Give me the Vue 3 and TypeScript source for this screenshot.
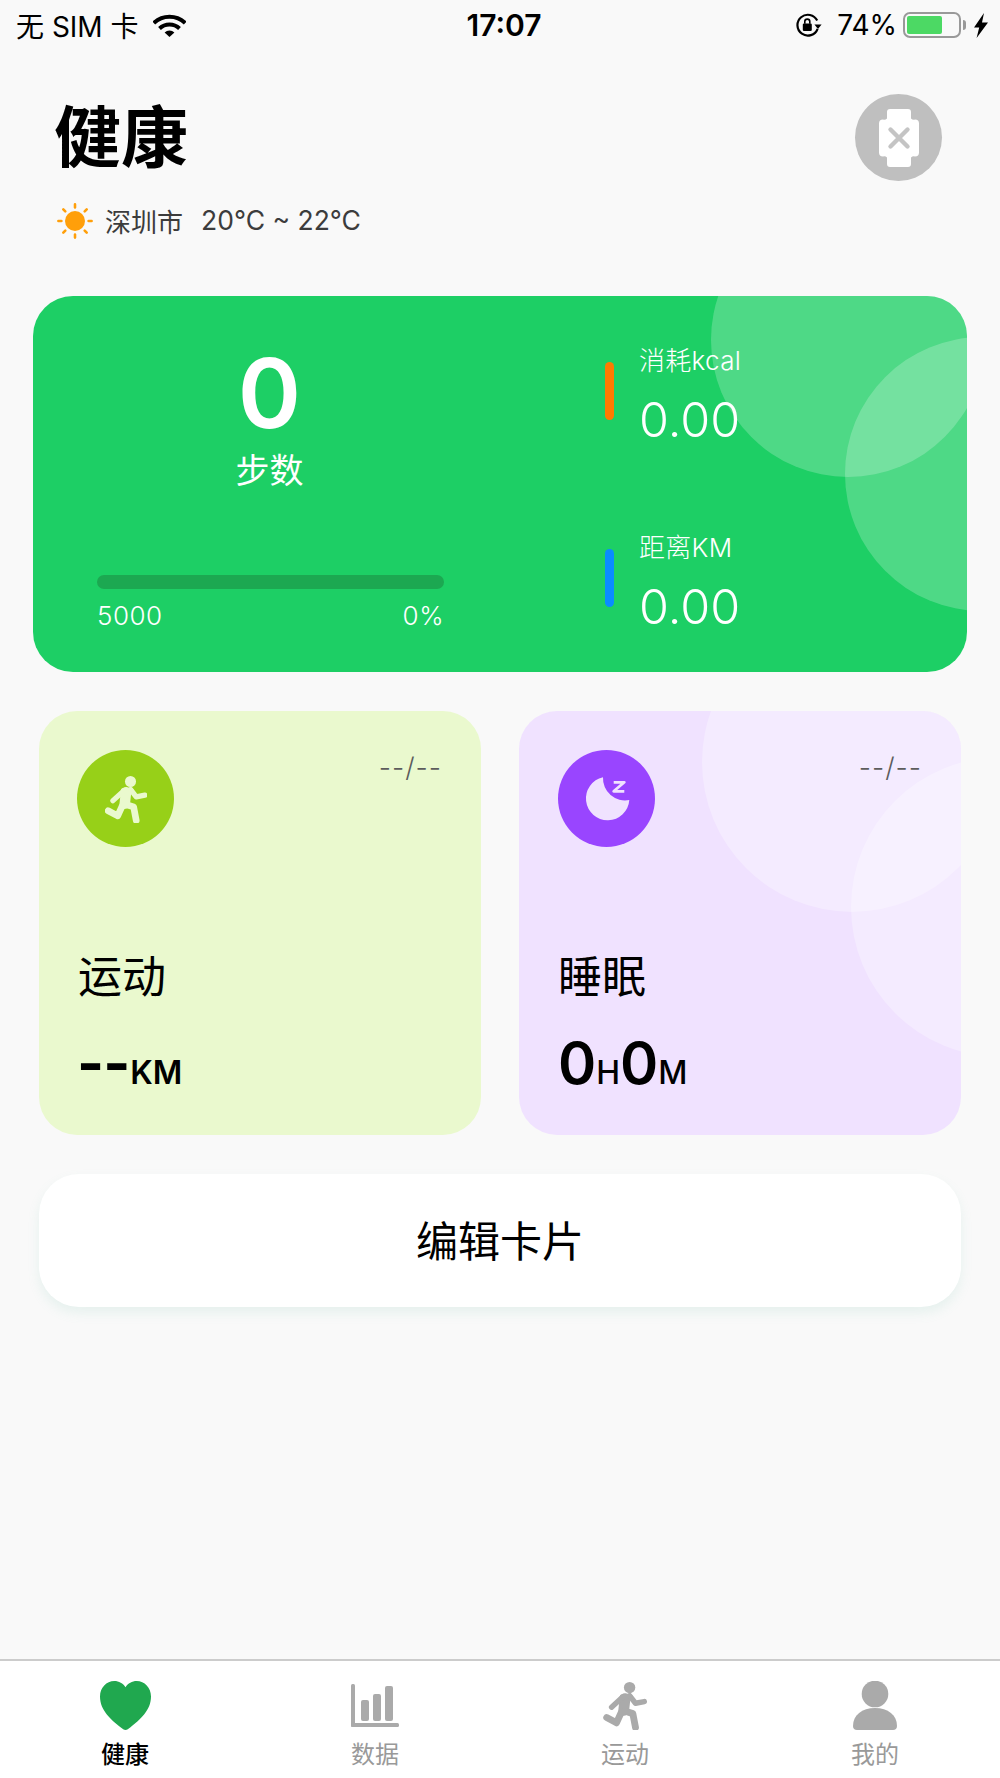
<template>
  <div class="page">
    <div class="status-bar">
      <div class="status-left">
        <span>无 SIM 卡</span>
        <svg class="wifi" viewBox="0 0 33 23" width="33" height="23">
          <path d="M0.800 9A23 23 0 0 1 32.200 9" fill="none" stroke="#000" stroke-width="4" />
          <path d="M6.500 14.500A14.500 14.500 0 0 1 26.500 14.500" fill="none" stroke="#000" stroke-width="4" />
          <path d="M11.600 18.400A7 7 0 0 1 21.400 18.400L16.500 23Z" fill="#000" />
        </svg>
      </div>
      <div class="status-time">17:07</div>
      <div class="status-right">
        <svg class="rotate-lock" viewBox="0 0 27 24" width="27" height="24">
          <path d="M22.600 15.800A10.400 10.400 0 1 1 22.200 7.600" fill="none" stroke="#000" stroke-width="2.200" />
          <path d="M19.400 11.400h7.200l-3.600 4.600Z" fill="#000" />
          <rect x="7.800" y="10.600" width="9" height="7.400" rx="1.200" fill="#000" />
          <path d="M9.800 10.800V8.600a2.500 2.500 0 0 1 5 0v2.200" fill="none" stroke="#000" stroke-width="1.600" />
        </svg>
        <span class="battery-text">74%</span>
        <div class="battery">
          <div class="battery-level"></div>
        </div>
        <div class="battery-nub"></div>
        <svg class="bolt" viewBox="0 0 14 25" width="14" height="25">
          <path d="M10 0L0 14.400h5.200L2.600 25 14 9.600H8Z" fill="#000" />
        </svg>
      </div>
    </div>

    <header class="header">
      <div>
        <h1 class="title">健康</h1>
        <div class="weather">
          <svg class="sun" viewBox="0 0 36 36" width="36" height="36">
            <circle cx="18" cy="18" r="10" fill="#ff9f0a" />
            <g stroke="#ff9f0a" stroke-width="2.600" stroke-linecap="round">
              <path d="M18 1.400V4.400M18 31.600V34.600M1.400 18H4.400M31.600 18H34.600" />
              <path d="M6.300 6.300L8.300 8.300M27.700 27.700L29.700 29.700M6.300 29.700L8.300 27.700M27.700 8.300L29.700 6.300" />
            </g>
          </svg>
          <span class="city">深圳市</span>
          <span class="temp">20°C ~ 22°C</span>
        </div>
      </div>
      <div class="watch">
        <svg viewBox="0 0 40 58" width="40" height="58">
          <path d="M8 3a3 3 0 0 1 3-3h18a3 3 0 0 1 3 3v6.500a4 4 0 0 0 4 1h0a4 4 0 0 1 4 4v29a4 4 0 0 1-4 4h0a4 4 0 0 0-4 1V55a3 3 0 0 1-3 3H11a3 3 0 0 1-3-3v-6.500a4 4 0 0 0-4-1h0a4 4 0 0 1-4-4v-29a4 4 0 0 1 4-4h0a4 4 0 0 0 4-1Z" fill="#fff" />
          <path d="M11.500 20.500L28.500 37.500M28.500 20.500L11.500 37.500" stroke="#c4c4c4" stroke-width="4.400" stroke-linecap="round" />
        </svg>
      </div>
    </header>

    <section class="steps-card">
      <div class="circle steps-circle-a"></div>
      <div class="circle steps-circle-b"></div>
      <div class="steps-left">
        <div class="steps-num">0</div>
        <div class="steps-label">步数</div>
        <div class="progress"></div>
        <div class="progress-meta">
          <span>5000</span>
          <span>0%</span>
        </div>
      </div>
      <div class="steps-right">
        <div class="stat">
          <div class="stat-bar orange"></div>
          <div>
            <div class="stat-label">消耗kcal</div>
            <div class="stat-value">0.00</div>
          </div>
        </div>
        <div class="stat">
          <div class="stat-bar blue"></div>
          <div>
            <div class="stat-label">距离KM</div>
            <div class="stat-value">0.00</div>
          </div>
        </div>
      </div>
    </section>

    <section class="cards">
      <div class="card sport">
        <div class="card-top">
          <div class="card-icon sport-icon">
            <svg viewBox="0 0 44 50" width="42" height="48" fill="none" stroke="#eaf9ce" stroke-linecap="round" stroke-linejoin="round">
              <circle cx="26.700" cy="6.700" r="5.800" fill="#eaf9ce" stroke="none" />
              <path d="M19.500 16.500H27" stroke-width="6" />
              <path d="M22 18L20.700 30" stroke-width="11" />
              <path d="M18.300 31.700L13.300 42.700L3.300 37.300M21.700 30.700L30 33.300L32.700 47.300" stroke-width="7" />
              <path d="M19.300 16.700L8.300 26.700M26.700 15L32.700 22.700L41.700 21" stroke-width="5.500" />
            </svg>
          </div>
          <span class="card-date">--/--</span>
        </div>
        <div class="card-title">运动</div>
        <div class="card-value"><b class="dash">--</b><span class="unit-km">KM</span></div>
      </div>
      <div class="card sleep">
        <div class="circle sleep-circle-a"></div>
        <div class="circle sleep-circle-b"></div>
        <div class="card-top">
          <div class="card-icon sleep-icon">
            <svg viewBox="0 0 50 50" width="50" height="50" fill="none">
              <path d="M21 3.300A21.700 21.700 0 1 0 47.300 26A22 22 0 0 1 21 3.300Z" fill="#f0e2ff" />
              <path d="M31.700 8.300H42.300L31.700 17.300H42.300" stroke="#f0e2ff" stroke-width="2.800" stroke-linejoin="round" />
            </svg>
          </div>
          <span class="card-date">--/--</span>
        </div>
        <div class="card-title">睡眠</div>
        <div class="card-value"><b>0</b><span class="unit">H</span><b>0</b><span class="unit">M</span></div>
      </div>
    </section>

    <button class="edit-btn">编辑卡片</button>

    <nav class="tabbar">
      <div class="tab active">
        <svg viewBox="0 0 51 49" width="51" height="49">
          <path d="M25.500 49C24 49 22.500 47.800 20.500 46.200C11 38.600 0 29.500 0 15.500C0 6.500 6.500 0 14.300 0C19 0 23 2.300 25.500 6.200C28 2.300 32 0 36.700 0C44.500 0 51 6.500 51 15.500C51 29.500 40 38.600 30.500 46.200C28.500 47.800 27 49 25.500 49Z" fill="#20a84f" />
        </svg>
        <span>健康</span>
      </div>
      <div class="tab">
        <svg viewBox="0 0 48 49" width="48" height="49" fill="#aaa">
          <rect x="0" y="3" width="4" height="43" rx="1.500" />
          <rect x="0" y="42" width="48" height="4" rx="1.500" />
          <rect x="10" y="19" width="8" height="21" rx="2" />
          <rect x="22" y="13" width="8" height="27" rx="2" />
          <rect x="34" y="5" width="8" height="35" rx="2" />
        </svg>
        <span>数据</span>
      </div>
      <div class="tab">
        <svg viewBox="0 0 44 50" width="44" height="49" fill="none" stroke="#aaa" stroke-linecap="round" stroke-linejoin="round">
          <circle cx="26.700" cy="6.700" r="5.800" fill="#aaa" stroke="none" />
          <path d="M19.500 16.500H27" stroke-width="6" />
          <path d="M22 18L20.700 30" stroke-width="11" />
          <path d="M18.300 31.700L13.300 42.700L3.300 37.300M21.700 30.700L30 33.300L32.700 47.300" stroke-width="7" />
          <path d="M19.300 16.700L8.300 26.700M26.700 15L32.700 22.700L41.700 21" stroke-width="5.500" />
        </svg>
        <span>运动</span>
      </div>
      <div class="tab">
        <svg viewBox="0 0 44 49" width="44" height="49" fill="#aaa">
          <circle cx="22" cy="13" r="13.300" />
          <path d="M0 45C0 34 9 27 22 27S44 34 44 45C44 47.500 42.500 49 40 49H4C1.500 49 0 47.500 0 45Z" />
        </svg>
        <span>我的</span>
      </div>
    </nav>
  </div>
</template>

<script setup lang="ts">
</script>

<style>
html,
body {
  margin: 0;
  background: #f9f9f9;
}
</style>

<style scoped>
.page {
  width: 1000px;
  height: 1778px;
  display: flex;
  flex-direction: column;
  overflow: hidden;
  background: #f9f9f9;
  font-family: Inter, "Noto Sans CJK SC", sans-serif;
  color: #000;
}

.status-bar {
  height: 50px;
  flex-shrink: 0;
  padding: 0 12px 0 16px;
  box-sizing: border-box;
  display: grid;
  grid-template-columns: 1fr auto 1fr;
  align-items: center;
  font-size: 28px;
}

.status-left {
  display: flex;
  align-items: center;
  gap: 14px;
}

.status-time {
  position: relative;
  left: 2px;
  font-size: 30px;
  font-weight: 600;
}

.status-right {
  display: flex;
  align-items: center;
  justify-content: flex-end;
}

.battery-text {
  margin-left: 15px;
  font-size: 28px;
}

.battery {
  width: 58px;
  height: 26px;
  margin-left: 6px;
  box-sizing: border-box;
  border: 2px solid #999;
  border-radius: 7px;
  padding: 2px;
}

.battery-level {
  width: 35px;
  height: 18px;
  background: #4cd964;
  border-radius: 2px;
}

.battery-nub {
  width: 3px;
  height: 10px;
  margin-left: 2px;
  background: #999;
  border-radius: 0 3px 3px 0;
}

.bolt {
  margin-left: 8px;
}

.header {
  padding: 44px 58px 0 55px;
  display: flex;
  justify-content: space-between;
  align-items: flex-start;
}

.title {
  margin: 10px 0 0 -1px;
  font-size: 67px;
  line-height: 67px;
  font-weight: 700;
}

.weather {
  margin-top: 32px;
  height: 36px;
  display: flex;
  align-items: center;
  font-size: 26px;
  color: #3c3c3c;
  margin-left: 2px;
}

.city {
  margin-left: 12px;
  position: relative;
  top: -1px;
}

.temp {
  margin-left: 18px;
  font-size: 26.500px;
  position: relative;
  top: -1px;
}

.watch {
  width: 87px;
  height: 87px;
  border-radius: 50%;
  background: #bfbfbf;
  display: flex;
  align-items: center;
  justify-content: center;
}

.steps-card {
  position: relative;
  overflow: hidden;
  margin: 57px 33px 0;
  height: 376px;
  flex-shrink: 0;
  border-radius: 40px;
  background: #1dcf65;
  display: flex;
  color: #fff;
}

.circle {
  position: absolute;
  border-radius: 50%;
  background: rgba(255, 255, 255, 0.22);
}

.steps-circle-a {
  width: 274px;
  height: 274px;
  left: 678px;
  top: -93px;
}

.steps-circle-b {
  width: 274px;
  height: 274px;
  left: 812px;
  top: 41px;
}

.steps-left {
  width: 347px;
  margin-left: 64px;
  padding: 49px 0 41px;
  box-sizing: border-box;
  display: flex;
  flex-direction: column;
  align-items: center;
}

.steps-num {
  font-size: 96px;
  line-height: 96px;
  font-weight: 600;
  margin-left: -2px;
}

.steps-label {
  margin: 10px 0 0 -2px;
  font-size: 34px;
  line-height: 40px;
}

.progress {
  width: 100%;
  height: 14px;
  margin-top: auto;
  border-radius: 7px;
  background: #1ca851;
}

.progress-meta {
  width: 100%;
  margin-top: 12px;
  display: flex;
  justify-content: space-between;
  font-size: 26px;
  line-height: 30px;
  letter-spacing: 0.5px;
  font-weight: 300;
}

.steps-right {
  position: relative;
  margin-left: 161px;
  padding-top: 48px;
  display: flex;
  flex-direction: column;
  gap: 81px;
}

.stat {
  display: flex;
  align-items: flex-start;
  gap: 25px;
}

.stat-bar {
  width: 9px;
  height: 58px;
  margin-top: 18px;
  border-radius: 5px;
}

.orange {
  background: #ff7a00;
}

.blue {
  background: #0a8cff;
}

.stat-label {
  font-size: 26px;
  line-height: 34px;
  font-weight: 300;
  letter-spacing: 0.3px;
}

.stat-value {
  margin-top: 12px;
  font-size: 48.500px;
  line-height: 60px;
  font-weight: 300;
}

.cards {
  margin: 39px 39px 0;
  display: grid;
  grid-template-columns: 1fr 1fr;
  gap: 38px;
  flex-shrink: 0;
}

.card {
  position: relative;
  overflow: hidden;
  height: 424px;
  box-sizing: border-box;
  padding: 39px 38px 27px 38px;
  border-radius: 38px;
  display: flex;
  flex-direction: column;
}

.sport {
  background: #eaf9ce;
}

.sleep {
  background: #f0e2ff;
  padding-left: 39px;
}

.sleep-circle-a {
  width: 300px;
  height: 300px;
  left: 183px;
  top: -99px;
  background: rgba(255, 255, 255, 0.3);
}

.sleep-circle-b {
  width: 300px;
  height: 300px;
  left: 332px;
  top: 46px;
  background: rgba(255, 255, 255, 0.3);
}

.card-top {
  position: relative;
  display: flex;
  justify-content: space-between;
  align-items: flex-start;
}

.card-icon {
  width: 97px;
  height: 97px;
  border-radius: 50%;
  display: flex;
  align-items: center;
  justify-content: center;
}

.sport-icon {
  background: #97d018;
}

.sleep-icon {
  background: #9945ff;
}

.card-date {
  margin: 3px 1px 0 0;
  font-size: 27px;
  line-height: 30px;
  letter-spacing: 1px;
  font-weight: 300;
  color: #5c5c5c;
}

.card-title {
  position: relative;
  margin-top: auto;
  font-size: 44px;
  line-height: 50px;
}

.sport .card-title {
  margin-left: 1px;
}

.card-value {
  position: relative;
  margin-top: 26px;
  display: flex;
  align-items: baseline;
  line-height: 70px;
}

.card-value b {
  font-size: 58px;
  font-weight: 600;
}

.card-value .dash {
  letter-spacing: -1px;
  font-weight: 700;
}

.unit {
  font-size: 32px;
  font-weight: 500;
}

.unit-km {
  margin-left: 1px;
  font-size: 32px;
  font-weight: 600;
}

.edit-btn {
  margin: 39px 39px 0;
  height: 133px;
  flex-shrink: 0;
  border: none;
  border-radius: 40px;
  background: #fff;
  box-shadow: 0 6px 12px rgba(120, 200, 180, 0.14);
  font-family: inherit;
  font-size: 42px;
  line-height: 60px;
  padding: 2px 0 0;
  color: #000;
}

.tabbar {
  margin-top: auto;
  height: 119px;
  flex-shrink: 0;
  box-sizing: border-box;
  border-top: 2px solid #ccc;
  background: #fff;
  padding-top: 20px;
  display: grid;
  grid-template-columns: repeat(4, 1fr);
}

.tab {
  display: flex;
  flex-direction: column;
  align-items: center;
  font-size: 24px;
  line-height: 30px;
  color: #999;
}

.tab span {
  margin-top: 10px;
}

.tab.active {
  color: #000;
  font-weight: 500;
}
</style>
